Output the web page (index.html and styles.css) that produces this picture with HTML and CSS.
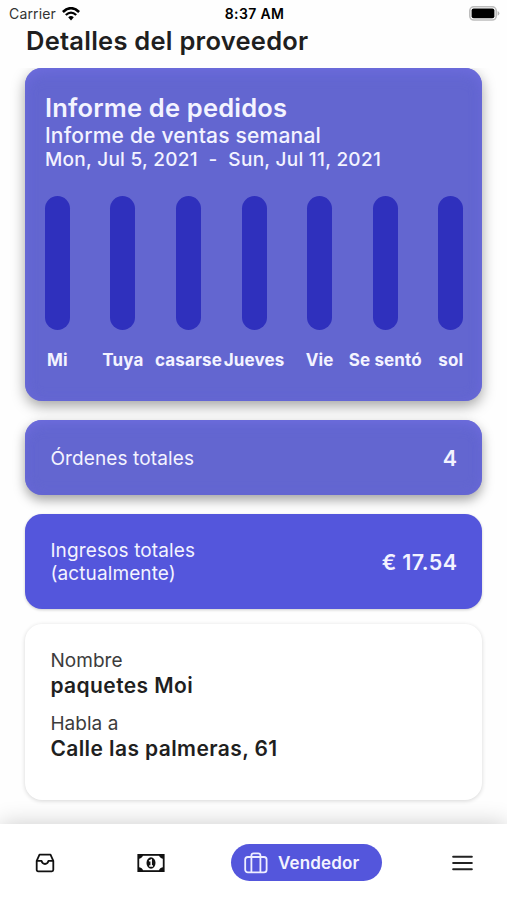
FILE: index.html
```
<!DOCTYPE html>
<html lang="es">
<head>
<meta charset="utf-8">
<title>Detalles del proveedor</title>
<link rel="stylesheet" href="styles.css">
</head>
<body>
  <div id="header">
    <div class="status">
      <div class="carrier">
        <span>Carrier</span>
        <svg width="18" height="14" viewBox="0 0 18 14">
          <path d="M0.9 5 Q9 -2.6 17.1 5" fill="none" stroke="#000" stroke-width="2.6"/>
          <path d="M3.8 8 Q9 3.2 14.2 8" fill="none" stroke="#000" stroke-width="2.3"/>
          <path d="M6.2 10.3 Q9 7.8 11.8 10.3 L9 13.4 Z"/>
        </svg>
      </div>
      <span class="time">8:37 AM</span>
      <svg class="battery" width="31" height="15" viewBox="0 0 31 15">
        <rect x="0.8" y="0.8" width="26.4" height="13.2" rx="4" fill="#fff" stroke="#bdbdbd" stroke-width="1.6"/>
        <rect x="2.6" y="2.6" width="22.8" height="9.6" rx="2" fill="#000"/>
        <path d="M28.6 5 Q30.4 6 30.4 7.4 Q30.4 8.8 28.6 9.8 Z" fill="#b5b5b5"/>
      </svg>
    </div>
    <h1>Detalles del proveedor</h1>
  </div>
  <div id="content">
    <div class="card report">
      <h2>Informe de pedidos</h2>
      <h3>Informe de ventas semanal</h3>
      <p class="dates">Mon, Jul 5, 2021&nbsp; -&nbsp; Sun, Jul 11, 2021</p>
      <div class="chart">
        <div class="day"><div class="bar"></div><span>Mi</span></div>
        <div class="day"><div class="bar"></div><span>Tuya</span></div>
        <div class="day"><div class="bar"></div><span>casarse</span></div>
        <div class="day"><div class="bar"></div><span>Jueves</span></div>
        <div class="day"><div class="bar"></div><span>Vie</span></div>
        <div class="day"><div class="bar"></div><span>Se sentó</span></div>
        <div class="day"><div class="bar"></div><span>sol</span></div>
      </div>
    </div>
    <div class="card orders">
      <span class="label">Órdenes totales</span>
      <span class="value">4</span>
    </div>
    <div class="card income">
      <span class="label">Ingresos totales<br>(actualmente)</span>
      <span class="value">€ 17.54</span>
    </div>
    <div class="card info">
      <p class="name">Nombre</p>
      <p class="text">paquetes Moi</p>
      <p class="name">Habla a</p>
      <p class="text">Calle las palmeras, 61</p>
    </div>
  </div>
  <div id="nav">
    <svg class="inbox" width="20" height="20" viewBox="0 0 20 20" fill="none" stroke="#111" stroke-width="1.8" stroke-linejoin="round">
      <path d="M4.5 1.7 H15.5 L18.3 7.8 V16.8 Q18.3 18.3 16.8 18.3 H3.2 Q1.7 18.3 1.7 16.8 V7.8 Z"/>
      <path d="M1.7 7.9 H6.6 Q7.2 11 10 11 Q12.8 11 13.4 7.9 H18.3"/>
    </svg>
    <svg class="money" width="28" height="20" viewBox="0 0 28 20">
      <rect x="1.3" y="1.9" width="25.4" height="16.2" fill="#fff" stroke="#111" stroke-width="1.8"/>
      <path d="M1 1.6 H6.2 Q5.8 5.6 1 6 Z M27 1.6 V6 Q22.2 5.6 21.8 1.6 Z M1 18.4 V14 Q5.8 14.4 6.2 18.4 Z M27 18.4 H21.8 Q22.2 14.4 27 14 Z" fill="#111"/>
      <ellipse cx="14" cy="10" rx="4.5" ry="5.7" fill="#111"/>
      <path d="M12.1 8.2 L14.2 7 V12.6 M12.2 12.9 H16" fill="none" stroke="#fff" stroke-width="1.5"/>
    </svg>
    <div class="active">
      <svg width="24" height="22" viewBox="0 0 24 22" fill="none" stroke="#eef" stroke-width="1.8">
        <rect x="1.2" y="5" width="21.4" height="15.4" rx="2.6"/>
        <path d="M7.4 20.4 V3.6 Q7.4 1.4 9.6 1.4 H14.2 Q16.4 1.4 16.4 3.6 V20.4"/>
      </svg>
      <span>Vendedor</span>
    </div>
    <svg class="menu" width="21" height="16" viewBox="0 0 21 16" fill="none" stroke="#222" stroke-width="2.1" stroke-linecap="round">
      <path d="M1.2 1.7 H19.8 M1.2 8 H19.8 M1.2 14.2 H19.8"/>
    </svg>
  </div>
</body>
</html>
```
FILE: styles.css
```
* {
box-sizing: border-box;
}

body {
margin: 0;
height: 900px;
display: flex;
flex-direction: column;
overflow: hidden;
background-color: #fefefe;
color: #1f1f1f;
font-family: Inter, "Liberation Sans", sans-serif;
}

h1, h2, h3, p {
margin: 0;
white-space: nowrap;
}

#header {
height: 68px;
flex: none;
}

.status {
height: 27px;
padding: 0 7px 0 9px;
display: grid;
grid-template-columns: 1fr auto 1fr;
align-items: center;
color: #000;
font-size: 14px;
letter-spacing: 0.15px;
}

.carrier {
display: flex;
align-items: center;
gap: 6px;
color: #333;
}

.time {
font-weight: 600;
letter-spacing: 0.35px;
}

.battery {
justify-self: end;
}

h1 {
padding-left: 26px;
font-size: 25.5px;
line-height: 28px;
font-weight: 600;
letter-spacing: 0.25px;
}

#content {
height: 756px;
flex: none;
padding: 0 24.6px 0 25.4px;
overflow: hidden;
}

.card {
border-radius: 17px;
color: #f3f3ff;
}

.report {
height: 332.5px;
padding: 26px 19px 0 19.5px;
background-color: #6366d0;
box-shadow: 0 5px 14px rgba(0, 0, 0, 0.36), inset 0 8px 16px -6px #6f6edf, inset 0 0 12px #6868d6;
}

h2 {
font-size: 25.5px;
line-height: 28px;
font-weight: 600;
letter-spacing: 0.2px;
}

h3 {
font-size: 21px;
line-height: 28px;
font-weight: 500;
letter-spacing: 0.2px;
}

.dates {
font-size: 19px;
line-height: 20px;
font-weight: 500;
letter-spacing: 0.28px;
}

.chart {
margin-top: 26px;
display: flex;
justify-content: space-between;
}

.day {
width: 25px;
display: flex;
flex-direction: column;
align-items: center;
gap: 20px;
font-size: 17px;
line-height: 20px;
font-weight: 700;
letter-spacing: 0.15px;
white-space: nowrap;
}

.bar {
width: 25px;
height: 134px;
flex: none;
border-radius: 13px;
background-color: #2f30bd;
}

.orders, .income {
padding: 0 25px;
display: flex;
align-items: center;
justify-content: space-between;
}

.orders {
height: 75px;
margin-top: 19.5px;
background-color: #6366d0;
box-shadow: 0 5px 12px rgba(0, 0, 0, 0.36), inset 0 8px 14px -6px #6f6edf, inset 0 0 12px #6868d6;
}

.income {
height: 95px;
margin-top: 19px;
background-color: #5456dc;
box-shadow: 0 1px 3px rgba(0, 0, 0, 0.2);
}

.label {
padding-top: 1px;
font-size: 19px;
line-height: 23px;
letter-spacing: 0.12px;
}

.value {
padding-top: 1px;
font-size: 21.5px;
font-weight: 600;
letter-spacing: 0.35px;
}

.info {
height: 176px;
margin-top: 15px;
padding: 24px 25px;
background-color: #fff;
color: #1f1f1f;
box-shadow: 0 1px 4px rgba(0, 0, 0, 0.16);
}

.name {
color: #3c3c3c;
font-size: 19px;
line-height: 25px;
letter-spacing: 0.05px;
}

.text {
margin-bottom: 13px;
font-size: 21px;
line-height: 25px;
font-weight: 600;
letter-spacing: 0.4px;
}

#nav {
height: 76px;
flex: none;
padding: 1px 34px 0 35px;
display: flex;
align-items: center;
background-color: #fff;
box-shadow: 0 0 22px rgba(0, 0, 0, 0.2);
position: relative;
}

.money {
margin-left: 82px;
}

.menu {
margin-left: auto;
}

.active {
width: 151px;
height: 37px;
margin-left: 66px;
padding-left: 13px;
display: flex;
align-items: center;
gap: 10px;
border-radius: 19px;
background-color: #5456dc;
color: #f3f3ff;
font-size: 17px;
font-weight: 600;
letter-spacing: 0.15px;
}
```
